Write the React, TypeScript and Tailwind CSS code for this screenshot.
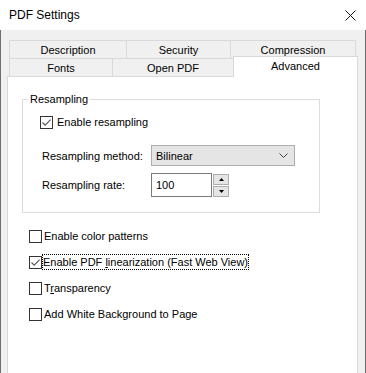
import React from 'react'

const Check = ({ checked }: { checked?: boolean }) => (
  <span className="flex h-[13px] w-[13px] shrink-0 items-center justify-center border border-[#333333] bg-white">
    {checked && (
      <svg width="11" height="11" viewBox="0 0 11 11">
        <path d="M1.5 5.5 L4.2 8.2 L9.6 2.6" stroke="#555" fill="none" strokeWidth="1.1" />
      </svg>
    )}
  </span>
)

const Tab = ({ label, w }: { label: string; w: string }) => (
  <div className={`-ml-px flex h-[18px] items-center justify-center border border-b-0 border-[#d9d9d9] first:ml-0 ${w}`}>
    {label}
  </div>
)

export default function App() {
  return (
    <div className="h-[373px] w-[366px] overflow-hidden bg-white font-['Liberation_Sans',Arial,sans-serif] text-[11px] leading-[14px] text-black">
      {/* title bar */}
      <div className="flex h-[30px] items-center justify-between pl-[9px] pr-[10px]">
        <span className="text-[12px]">PDF Settings</span>
        <svg width="11" height="11" viewBox="0 0 11 11">
          <path d="M0.5 0.5 L10.5 10.5 M10.5 0.5 L0.5 10.5" stroke="#111" strokeWidth="1" />
        </svg>
      </div>

      <div className="flex h-[343px] flex-col border-x border-[#6d6d6d] bg-[#f0f0f0] pt-[10px]">
        {/* tabs */}
        <div className="ml-[8px] flex h-[18px]">
          <Tab label="Description" w="w-[118px]" />
          <Tab label="Security" w="w-[105px]" />
          <Tab label="Compression" w="w-[126px]" />
        </div>
        <div className="ml-[8px] flex h-[18px] items-start">
          <Tab label="Fonts" w="w-[104px]" />
          <Tab label="Open PDF" w="w-[122px]" />
          <div className="relative z-10 -ml-px -mt-[2px] flex h-[21px] w-[125px] justify-center border border-b-0 border-[#d9d9d9] bg-white pt-[2px]">
            Advanced
          </div>
        </div>

        {/* panel */}
        <div className="ml-[6px] w-[351px] flex-1 border border-b-0 border-[#d9d9d9] bg-white pl-[14px] pt-[15px]">
          <fieldset className="w-[298px] border border-[#dcdcdc] pb-[15px] pl-[17px] pt-[9px]">
            <legend className="-ml-[12px] px-[2px]">Resampling</legend>
            <label className="flex items-center gap-[4px]">
              <Check checked />
              <span>Enable resampling</span>
            </label>

            <div className="mt-[16px] flex items-center pl-[2px]">
              <span className="w-[109px]">Resampling method:</span>
              <div className="flex h-[21px] w-[144px] items-center justify-between border border-[#adadad] bg-[#e5e5e5] pl-[4px] pr-[6px]">
                <span>Bilinear</span>
                <svg width="9" height="5" viewBox="0 0 9 5">
                  <path d="M0.5 0.5 L4.5 4.5 L8.5 0.5" stroke="#444" fill="none" strokeWidth="1" />
                </svg>
              </div>
            </div>

            <div className="mt-[7px] flex items-center pl-[2px]">
              <span className="w-[109px]">Resampling rate:</span>
              <div className="flex h-[24px] w-[61px] items-center border border-[#7a7a7a] bg-white pl-[4px]">100</div>
              <div className="ml-[1px] flex flex-col gap-[1px]">
                <div className="flex h-[11px] w-[16px] items-center justify-center border border-[#adadad] bg-[#e5e5e5]">
                  <svg width="5" height="3" viewBox="0 0 5 3"><path d="M2.5 0 L5 3 L0 3 Z" fill="#000" /></svg>
                </div>
                <div className="flex h-[11px] w-[16px] items-center justify-center border border-[#adadad] bg-[#e5e5e5]">
                  <svg width="5" height="3" viewBox="0 0 5 3"><path d="M0 0 L5 0 L2.5 3 Z" fill="#000" /></svg>
                </div>
              </div>
            </div>
          </fieldset>

          <div className="mt-[16px] flex flex-col gap-[12px] pl-[7px]">
            <label className="flex items-center gap-[2px]">
              <Check />
              <span>Enable color patterns</span>
            </label>
            <label className="flex items-center gap-[1px]">
              <Check checked />
              <span className="outline-1 outline-dotted outline-black">
                Enable PDF <u>l</u>inearization (Fast Web View)
              </span>
            </label>
            <label className="flex items-center gap-[2px]">
              <Check />
              <span>
                T<u>r</u>ansparency
              </span>
            </label>
            <label className="flex items-center gap-[2px]">
              <Check />
              <span>Add White Background to Page</span>
            </label>
          </div>
        </div>
      </div>
    </div>
  )
}
